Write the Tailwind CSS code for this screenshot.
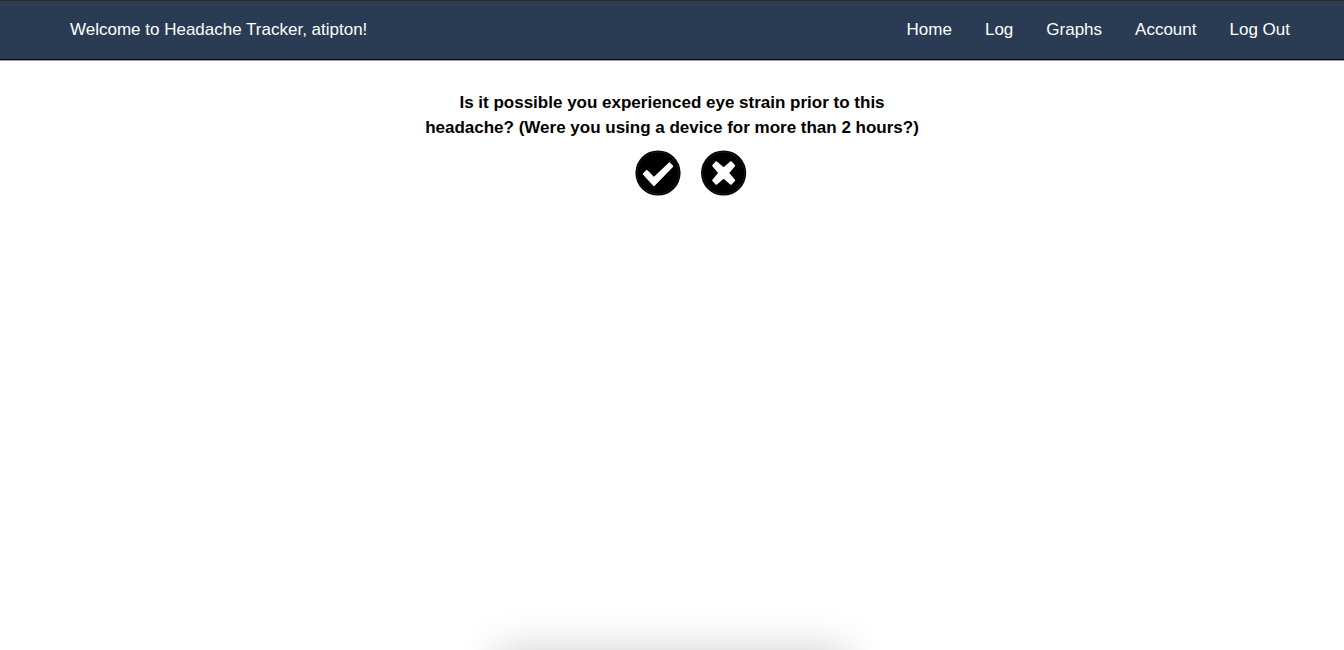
<!DOCTYPE html>
<html lang="en">
<head>
<meta charset="utf-8">
<meta name="viewport" content="width=device-width, initial-scale=1">
<title>Headache Tracker</title>
<script src="https://cdn.jsdelivr.net/npm/@tailwindcss/browser@4"></script>
</head>
<body class="bg-white font-['Liberation_Sans',Arial,sans-serif] text-[17px] leading-[25px] text-black">
<div class="relative flex min-h-screen flex-col overflow-clip">
<header class="flex items-center justify-between border-y border-t-[#2b2b2b] border-b-[#05080d] bg-[#293c54] pt-4 pr-[54px] pb-[17px] pl-[70px] text-white shadow-[0_1px_0_#9ca3ab]">
<p>Welcome to Headache Tracker, atipton!</p>
<nav class="flex gap-[33px]">
<a href="#">Home</a>
<a href="#">Log</a>
<a href="#">Graphs</a>
<a href="#">Account</a>
<a href="#">Log Out</a>
</nav>
</header>
<main class="flex flex-col items-center pt-[30px]">
<h1 class="text-center font-bold">Is it possible you experienced eye strain prior to this<br>headache? (Were you using a device for more than 2 hours?)</h1>
<div class="mt-[10px] ml-[37px] flex gap-5">
<button type="button" aria-label="Yes" class="size-[46px]">
<svg viewBox="0 0 46 46" class="size-full"><circle cx="23" cy="23" r="22.6"/><circle cx="23" cy="23" r="21" fill="none" stroke="#333" stroke-width=".5"/><path d="M11.8 21L8.8 24L19 35L37.2 16.2L34.4 13.4L18.9 28.2Z" fill="#fff" stroke="#fff" stroke-width="2" stroke-linejoin="round"/></svg>
</button>
<button type="button" aria-label="No" class="size-[46px]">
<svg viewBox="0 0 46 46" class="size-full"><circle cx="22.6" cy="23" r="22.6"/><circle cx="22.6" cy="23" r="21" fill="none" stroke="#333" stroke-width=".5"/><path d="M15.3 12.3L12.2 15.6L18.4 23L12.2 30.4L15.3 33.7L22.6 27.6L29.9 33.7L33.2 30.4L26.9 23L33.2 15.6L29.9 12.3L22.6 18.4Z" fill="#fff" stroke="#fff" stroke-width="2" stroke-linejoin="round"/></svg>
</button>
</div>
</main>
<div class="absolute top-full left-1/2 h-10 w-[350px] -translate-x-1/2 shadow-[0_0_40px_rgba(0,0,0,0.2)]"></div>
</div>
</body>
</html>
